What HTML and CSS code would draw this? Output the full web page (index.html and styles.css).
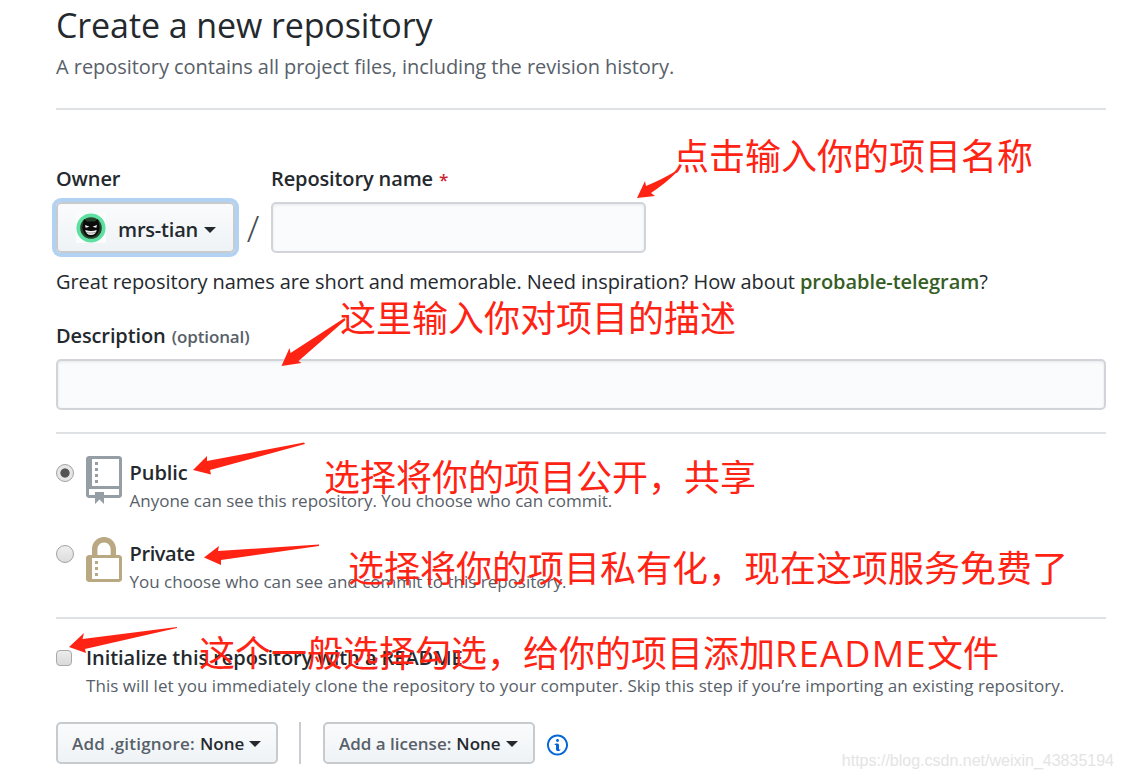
FILE: index.html
```html
<!DOCTYPE html>
<html lang="en">
<head>
    <meta charset="UTF-8">
    <meta name="viewport" content="width=device-width, initial-scale=1.0">
    <title>Create a new repository</title>
    <link rel="stylesheet" href="styles.css">
</head>
<body>
    <main class="container">
        <header class="subhead">
            <h1>Create a new repository</h1>
            <p>A repository contains all project files, including the revision history.</p>
        </header>

        <form>
            <div class="name-row">
                <div class="field owner">
                    <label>Owner</label>
                    <button type="button" class="btn btn-owner">
                        <svg class="avatar" width="30" height="30" viewBox="0 0 30 30">
                            <rect width="30" height="30" fill="#fbfdfc"/>
                            <circle cx="15" cy="15" r="14.6" fill="#5ee0a3"/>
                            <circle cx="15" cy="15" r="10.8" fill="#26402a"/>
                            <path d="M8 6l3 2.500h8L22 6l1.500 8c0 6-3.700 10-8.500 10S6.500 20 6.500 14z" fill="#0b0b0b"/>
                            <path d="M9 12l4.500 1.800-3.800 1zM21 12l-4.500 1.800 3.800 1z" fill="#fff"/>
                            <path d="M9.300 17c3.800 1.300 7.600 1.300 11.400 0-.5 3.500-2.500 5-5.700 5s-5.200-1.500-5.700-5z" fill="#eee"/>
                            <path d="M10 19.300c3.500 1 6.500 1 10 0" stroke="#444" stroke-width=".5" fill="none"/>
                        </svg>
                        <span>mrs-tian</span>
                        <i class="caret"></i>
                    </button>
                </div>
                <span class="slash">/</span>
                <div class="field">
                    <label>Repository name <span class="required">*</span></label>
                    <input type="text" class="input input-name">
                </div>
            </div>

            <p class="hint">Great repository names are short and memorable. Need inspiration? How about <strong>probable-telegram</strong>?</p>

            <div class="field description">
                <label>Description <small>(optional)</small></label>
                <input type="text" class="input">
            </div>

            <div class="visibility">
                <div class="option">
                    <span class="radio checked"></span>
                    <svg width="36" height="48" viewBox="0 0 12 16" fill="#959da5"><path fill-rule="evenodd" d="M4 9H3V8h1v1zm0-3H3v1h1V6zm0-2H3v1h1V4zm0-2H3v1h1V2zm8-1v12c0 .55-.45 1-1 1H6v2l-1.5-1.5L3 16v-2H1c-.55 0-1-.45-1-1V1c0-.55.45-1 1-1h10c.55 0 1 .45 1 1zm-1 10H1v2h2v-1h3v1h5v-2zm0-10H2v9h9V1z"/></svg>
                    <div class="option-text">
                        <b>Public</b>
                        <span class="note">Anyone can see this repository. You choose who can commit.</span>
                    </div>
                </div>
                <div class="option">
                    <span class="radio"></span>
                    <svg width="36" height="48" viewBox="0 0 12 16" fill="#b9a881"><path fill-rule="evenodd" d="M4 13H3v-1h1v1zm8-6v7c0 .55-.45 1-1 1H1c-.55 0-1-.45-1-1V7c0-.55.45-1 1-1h1V4c0-2.2 1.8-4 4-4s4 1.8 4 4v2h1c.55 0 1 .45 1 1zM3.8 6h4.41V4c0-1.22-.98-2.2-2.2-2.2-1.22 0-2.2.98-2.2 2.2v2H3.8zM11 7H2v7h9V7zM4 8H3v1h1V8zm0 2H3v1h1v-1z"/></svg>
                    <div class="option-text">
                        <b class="private">Private</b>
                        <span class="note">You choose who can see and commit to this repository.</span>
                    </div>
                </div>
            </div>

            <div class="init">
                <span class="checkbox"></span>
                <div class="option-text">
                    <b>Initialize this repository with a README</b>
                    <span class="note note-init">This will let you immediately clone the repository to your computer. Skip this step if you’re importing an existing repository.</span>
                </div>
            </div>

            <div class="templates">
                <button type="button" class="btn btn-ignore"><span>Add .gitignore:</span><b>None</b><i class="caret"></i></button>
                <span class="divider"></span>
                <button type="button" class="btn btn-license"><span>Add a license:</span><b>None</b><i class="caret"></i></button>
                <svg class="info" width="21" height="24" viewBox="0 0 14 16" fill="#0366d6"><path fill-rule="evenodd" d="M6.3 5.69a.942.942 0 0 1-.28-.7c0-.28.09-.52.28-.7.19-.18.42-.28.7-.28.28 0 .52.09.7.28.18.19.28.42.28.7 0 .28-.09.52-.28.7a1 1 0 0 1-.7.3c-.28 0-.52-.11-.7-.3zM8 7.99c-.02-.25-.11-.48-.31-.69-.2-.19-.42-.3-.69-.31H6c-.27.02-.48.13-.69.31-.2.2-.3.44-.31.69h1v3c.02.27.11.5.31.69.2.2.42.31.69.31h1c.27 0 .48-.11.69-.31.2-.19.3-.42.31-.69H8V7.98v.01zM7 2.3c-3.14 0-5.7 2.54-5.7 5.68 0 3.14 2.56 5.7 5.7 5.7s5.7-2.55 5.7-5.7c0-3.15-2.56-5.69-5.7-5.69v.01zM7 .98c3.86 0 7 3.14 7 7s-3.14 7-7 7-7-3.12-7-7 3.14-7 7-7z"/></svg>
            </div>
        </form>
    </main>

    <!-- red notes over the form -->
    <svg class="arrows" width="1123" height="779" viewBox="0 0 1123 779">
        <path d="M637 198l8-17 1 5c10-4 20-9 30-15l1 1c-8 8-17 15-26 21l4 3z"/>
        <path d="M281.500 366l8-18 1 5 54-35 1 2-47 41 3 2z"/>
        <path d="M193 470l14-14 0 5 97-18.500 1 1.500-95 26 1 4.500z"/>
        <path d="M204 557.500l15-11.500-1 5 101-6.500v1.500l-98 14 0 5z"/>
        <path d="M69 647l15-14-1.500 6 94.500-12v1L85 649l1 4z"/>
    </svg>
    <span class="mark mark-name">点击输入你的项目名称</span>
    <span class="mark mark-desc">这里输入你对项目的描述</span>
    <span class="mark mark-public">选择将你的项目公开，共享</span>
    <span class="mark mark-private">选择将你的项目私有化，现在这项服务免费了</span>
    <span class="mark mark-init">这个一般选择勾选，给你的项目添加<span class="latin">README</span>文件</span>
    <span class="watermark">https://blog.csdn.net/weixin_43835194</span>
</body>
</html>
```
FILE: styles.css
```css
* {
    box-sizing: border-box;
}
body {
    margin: 0;
    height: 779px;
    position: relative;
    overflow: hidden;
    background: #fff;
    color: #24292e;
    font-family: "Open Sans", "Noto Sans", sans-serif;
    font-size: 20px;
    line-height: 30px;
    white-space: nowrap;
}
h1, p {
    margin: 0;
    font-weight: 400;
}
b, strong {
    font-weight: 600;
}
.container {
    width: 1050px;
    margin-left: 56px;
}
.subhead {
    height: 110px;
    border-bottom: 2px solid #dfe2e5;
}
.subhead h1 {
    font-size: 34px;
    line-height: 51px;
    letter-spacing: -.1px;
}
.subhead p {
    color: #586069;
    line-height: 32px;
    letter-spacing: -.045px;
}
.name-row {
    display: flex;
    padding-top: 54px;
}
.field label {
    display: block;
    font-weight: 600;
    line-height: 30px;
    margin-bottom: 7px;
    letter-spacing: -.12px;
}
.owner {
    width: 179px;
}
.required {
    color: #cb2431;
    font-size: 17px;
    margin-left: 1px;
}
.slash {
    width: 36px;
    padding-top: 49px;
    text-align: center;
    font-size: 37px;
    font-weight: 300;
    color: #444d56;
}
.btn {
    display: flex;
    align-items: center;
    border: 2px solid #c8cbce;
    border-radius: 5px;
    background: linear-gradient(#fafbfc, #eff3f6);
    color: #24292e;
    font: 600 17px/27px "Open Sans", "Noto Sans", sans-serif;
    padding: 0;
}
.btn-owner {
    width: 179px;
    height: 51px;
    margin-top: 8px;
    padding-left: 18px;
    font-size: 20px;
    letter-spacing: -.2px;
    box-shadow: 0 0 0 4px #b2d2f3;
}
.btn-owner span {
    padding-top: 3px;
}
.avatar {
    margin-right: 12px;
}
.caret {
    border: 6px solid transparent;
    border-top-color: #24292e;
    border-bottom: 0;
    margin-left: 5px;
}
.btn-owner .caret {
    margin-top: 5px;
    margin-left: 6px;
}
.input {
    display: block;
    width: 100%;
    height: 51px;
    border: 2px solid #d1d5da;
    border-radius: 5px;
    background: #fafbfc;
    box-shadow: inset 0 1px 3px rgba(27, 31, 35, .09);
}
.input-name {
    width: 375px;
}
.hint {
    padding-top: 14px;
    letter-spacing: -.1px;
}
.hint strong {
    color: #355e24;
    letter-spacing: -.06px;
}
.description {
    padding: 24px 0 22px;
    border-bottom: 2px solid #dfe2e5;
}
.description small {
    color: #586069;
    font-size: 17px;
    margin-left: 1px;
}
.visibility {
    height: 185px;
    padding-top: 22px;
    border-bottom: 2px solid #dfe2e5;
}
.option {
    display: flex;
    height: 81px;
}
.radio {
    width: 18px;
    height: 18px;
    margin: 8px 12px 0 0;
    border: 1px solid #a2a2a2;
    border-radius: 50%;
    background: linear-gradient(#efefef, #dcdcdc);
}
.checked {
    background: radial-gradient(circle, #555 4.2px, #e6e6e6 5px);
}
.option-text {
    display: flex;
    flex-direction: column;
    margin-left: 8px;
}
.option .option-text {
    padding-top: 2px;
    margin-left: 7.5px;
}
.option-text b {
    line-height: 29px;
    letter-spacing: -.05px;
}
.option-text .private {
    letter-spacing: -.4px;
}
.note {
    color: #586069;
    font-size: 17px;
    line-height: 27px;
}
.note-init {
    letter-spacing: .05px;
}
.init {
    display: flex;
    height: 103px;
    padding-top: 24px;
}
.checkbox {
    width: 16px;
    height: 16px;
    margin: 7px 6px 0 0;
    border: 1.5px solid #a8a8a8;
    border-radius: 4px;
    background: linear-gradient(#ececec, #d9d9d9);
}
.templates {
    display: flex;
    align-items: center;
}
.templates .btn {
    height: 42px;
    padding: 1px 0 0 14px;
}
.templates .btn span {
    color: #586069;
    margin-right: 5px;
}
.templates .btn-ignore span {
    letter-spacing: .23px;
}
.btn-ignore {
    width: 222px;
}
.btn-license {
    width: 212px;
}
.divider {
    width: 2px;
    height: 42px;
    margin: 0 22px 0 21px;
    background: #c9ccd0;
}
.info {
    margin: 3px 0 0 12px;
}

/* annotations */
.arrows {
    position: absolute;
    top: 0;
    left: 0;
    fill: #ff2314;
}
.mark {
    position: absolute;
    color: #ff2314;
    font: 400 36px/48px "Noto Sans CJK SC", sans-serif;
}
.latin {
    font-family: "Open Sans", "Noto Sans", sans-serif;
    letter-spacing: 1.4px;
}
.mark-name {
    left: 673px;
    top: 130px;
}
.mark-desc {
    left: 340px;
    top: 292px;
}
.mark-public {
    left: 324px;
    top: 451px;
}
.mark-private {
    left: 348px;
    top: 542px;
}
.mark-init {
    left: 199px;
    top: 627px;
}
.watermark {
    position: absolute;
    right: 9px;
    top: 750px;
    color: #e4e4e4;
    font: 16px/22px "Liberation Sans", Arial, sans-serif;
}
```
